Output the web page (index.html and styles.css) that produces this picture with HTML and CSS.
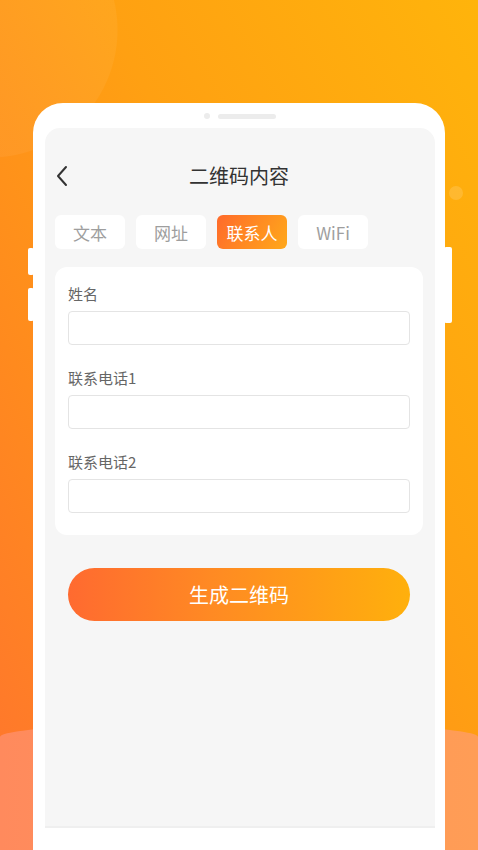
FILE: index.html
```html
<!DOCTYPE html>
<html lang="zh-CN">
<head>
<meta charset="utf-8">
<title>二维码内容</title>
<link rel="stylesheet" href="styles.css">
</head>
<body>
<div class="deco deco-small"></div>
<div class="deco deco-wave"></div>

<div class="phone">
  <span class="side-btn side-l1"></span>
  <span class="side-btn side-l2"></span>
  <span class="side-btn side-r1"></span>
  <div class="notch"><span class="cam"></span><span class="speaker"></span></div>
  <div class="screen">
    <header class="nav">
      <svg class="back" width="14" height="22" viewBox="0 0 14 22"><path d="M11 2 L3 11 L11 20" fill="none" stroke="#333" stroke-width="2" stroke-linecap="round" stroke-linejoin="round"/></svg>
      <h1 class="title">二维码内容</h1>
    </header>
    <nav class="tabs">
      <span class="tab">文本</span>
      <span class="tab">网址</span>
      <span class="tab active">联系人</span>
      <span class="tab">WiFi</span>
    </nav>
    <form class="card">
      <label class="field">
        <span class="label">姓名</span>
        <span class="input"></span>
      </label>
      <label class="field">
        <span class="label">联系电话1</span>
        <span class="input"></span>
      </label>
      <label class="field">
        <span class="label">联系电话2</span>
        <span class="input"></span>
      </label>
    </form>
    <div class="gen">生成二维码</div>
  </div>
</div>
</body>
</html>
```

FILE: styles.css
```css
* { box-sizing: border-box; }
html, body { margin: 0; padding: 0; }
body {
  width: 478px;
  height: 850px;
  overflow: hidden;
  position: relative;
  font-family: "Noto Sans CJK SC", "Noto Sans", "Liberation Sans", sans-serif;
  background:
    radial-gradient(circle at -10px 30px, rgba(255, 255, 255, 0.05) 127px, rgba(255, 255, 255, 0) 128px),
    linear-gradient(to bottom left, #FFB40B 0%, #FFA012 40%, #FF8A1E 70%, #FF742E 100%);
}
.deco { position: absolute; }
.deco-small {
  left: 449px; top: 186px; width: 14px; height: 14px;
  border-radius: 50%;
  background: rgba(255, 255, 255, 0.14);
}
.deco-wave {
  left: 0; right: 0; top: 722px; bottom: 0;
  border-radius: 239px 239px 0 0 / 15px 15px 0 0;
  background: linear-gradient(90deg, #FF8A5D 0%, #FF9458 50%, #FF9D56 100%);
}

.phone {
  position: relative;
  margin: 103px 0 0 33px;
  width: 412px;
  height: 747px;
  background: #fff;
  border-radius: 30px 30px 0 0;
  padding: 0 10px 0 12px;
}
.side-btn { position: absolute; background: #fff; border-radius: 2px; }
.side-l1 { left: -5px; top: 145px; width: 6px; height: 27px; }
.side-l2 { left: -5px; top: 185px; width: 6px; height: 33px; }
.side-r1 { right: -7px; top: 144px; width: 8px; height: 76px; }

.notch {
  height: 25px;
  display: flex;
  align-items: center;
  justify-content: center;
  gap: 8px;
  padding-top: 1px;
}
.cam { width: 6px; height: 6px; border-radius: 50%; background: #ECECEC; }
.speaker { width: 58px; height: 5px; border-radius: 3px; background: #ECECEC; }

.screen {
  height: 700px;
  background: #F6F6F6;
  border-radius: 15px 15px 0 0;
  border-bottom: 2px solid #EFEFEF;
  padding: 30px 12px 0 10px;
}
.nav {
  position: relative;
  height: 36px;
  display: flex;
  align-items: center;
  justify-content: center;
}
.back { position: absolute; left: 0; top: 7px; }
.title {
  margin: 0;
  font-size: 20px;
  font-weight: 400;
  color: #333;
  line-height: 36px;
}
.tabs {
  margin-top: 21px;
  display: flex;
  gap: 11px;
}
.tab {
  width: 70px;
  height: 34px;
  border-radius: 6px;
  background: #fff;
  color: #9E9E9E;
  font-size: 17px;
  display: flex;
  align-items: center;
  justify-content: center;
}
.tab.active {
  color: #fff;
  background: linear-gradient(120deg, #FF6A2B 0%, #FF8A22 50%, #FFA81B 100%);
}

.card {
  margin: 18px 0 0 0;
  background: #fff;
  border-radius: 12px;
  padding: 16px 13px 22px;
  display: flex;
  flex-direction: column;
  gap: 22px;
}
.field { display: flex; flex-direction: column; gap: 7px; }
.label { font-size: 15px; line-height: 21px; color: #666; }
.input {
  display: block;
  height: 34px;
  border: 1px solid #E4E4E4;
  border-radius: 4px;
  background: #fff;
}
.gen {
  margin: 33px 13px 0;
  height: 53px;
  border-radius: 27px;
  background: linear-gradient(90deg, #FF6A30 0%, #FF8C22 45%, #FFB00C 100%);
  color: #fff;
  font-size: 20px;
  display: flex;
  align-items: center;
  justify-content: center;
}
```
